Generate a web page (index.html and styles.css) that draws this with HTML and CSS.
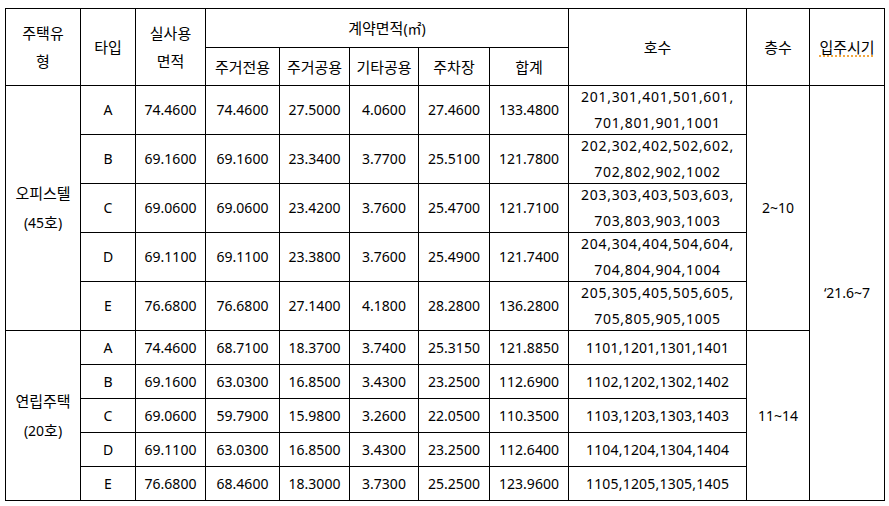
FILE: index.html
```html
<!DOCTYPE html>
<html lang="ko">
<head>
<meta charset="utf-8">
<link rel="stylesheet" href="styles.css">
</head>
<body>
<table class="grid">
  <colgroup>
    <col class="c1"><col class="c2"><col class="c3"><col class="c4"><col class="c5"><col class="c6"><col class="c7"><col class="c8"><col class="c9"><col class="c10"><col class="c11">
  </colgroup>
  <tr class="h1">
    <td rowspan="2" class="ko"><div class="two-h">주택유<br>형</div></td>
    <td rowspan="2" class="ko">타입</td>
    <td rowspan="2" class="ko"><div class="two-h">실사용<br>면적</div></td>
    <td colspan="5"><span class="ko">계약면적</span>(㎡)</td>
    <td rowspan="2" class="ko">호수</td>
    <td rowspan="2" class="ko">층수</td>
    <td rowspan="2" class="ko"><span class="spell">입주시기</span></td>
  </tr>
  <tr class="h2">
    <td class="ko">주거전용</td><td class="ko">주거공용</td><td class="ko">기타공용</td><td class="ko">주차장</td><td class="ko">합계</td>
  </tr>
  <tr class="r1">
    <td rowspan="5"><div class="two-g"><span class="ko">오피스텔</span><br>(45<span class="ko">호</span>)</div></td>
    <td>A</td><td>74.4600</td><td>74.4600</td><td>27.5000</td><td>4.0600</td><td>27.4600</td><td>133.4800</td>
    <td><div class="units">201,301,401,501,601,<br>701,801,901,1001</div></td>
    <td rowspan="5">2~10</td>
    <td rowspan="10">‘21.6~7</td>
  </tr>
  <tr class="r1">
    <td>B</td><td>69.1600</td><td>69.1600</td><td>23.3400</td><td>3.7700</td><td>25.5100</td><td>121.7800</td>
    <td><div class="units">202,302,402,502,602,<br>702,802,902,1002</div></td>
  </tr>
  <tr class="r1">
    <td>C</td><td>69.0600</td><td>69.0600</td><td>23.4200</td><td>3.7600</td><td>25.4700</td><td>121.7100</td>
    <td><div class="units">203,303,403,503,603,<br>703,803,903,1003</div></td>
  </tr>
  <tr class="r1">
    <td>D</td><td>69.1100</td><td>69.1100</td><td>23.3800</td><td>3.7600</td><td>25.4900</td><td>121.7400</td>
    <td><div class="units">204,304,404,504,604,<br>704,804,904,1004</div></td>
  </tr>
  <tr class="r1">
    <td>E</td><td>76.6800</td><td>76.6800</td><td>27.1400</td><td>4.1800</td><td>28.2800</td><td>136.2800</td>
    <td><div class="units">205,305,405,505,605,<br>705,805,905,1005</div></td>
  </tr>
  <tr class="r2">
    <td rowspan="5"><div class="two-g"><span class="ko">연립주택</span><br>(20<span class="ko">호</span>)</div></td>
    <td>A</td><td>74.4600</td><td>68.7100</td><td>18.3700</td><td>3.7400</td><td>25.3150</td><td>121.8850</td>
    <td class="units2">1101,1201,1301,1401</td>
    <td rowspan="5">11~14</td>
  </tr>
  <tr class="r2">
    <td>B</td><td>69.1600</td><td>63.0300</td><td>16.8500</td><td>3.4300</td><td>23.2500</td><td>112.6900</td>
    <td class="units2">1102,1202,1302,1402</td>
  </tr>
  <tr class="r2">
    <td>C</td><td>69.0600</td><td>59.7900</td><td>15.9800</td><td>3.2600</td><td>22.0500</td><td>110.3500</td>
    <td class="units2">1103,1203,1303,1403</td>
  </tr>
  <tr class="r2">
    <td>D</td><td>69.1100</td><td>63.0300</td><td>16.8500</td><td>3.4300</td><td>23.2500</td><td>112.6400</td>
    <td class="units2">1104,1204,1304,1404</td>
  </tr>
  <tr class="r2">
    <td>E</td><td>76.6800</td><td>68.4600</td><td>18.3000</td><td>3.7300</td><td>25.2500</td><td>123.9600</td>
    <td class="units2">1105,1205,1305,1405</td>
  </tr>
</table>
</body>
</html>
```

FILE: styles.css
```css
html, body {
  background: #ffffff;
}
body {
  margin: 8px 0 0 5px;
  font-family: "Noto Sans", "Noto Sans CJK KR", sans-serif;
  font-size: 14px;
  color: #000000;
}
.grid {
  border-collapse: collapse;
  table-layout: fixed;
  width: 879px;
}
.grid td {
  border: 1px solid #000000;
  padding: 0;
  text-align: center;
  vertical-align: middle;
  line-height: 20px;
  white-space: nowrap;
  overflow: visible;
}
.ko {
  font-family: "Noto Sans CJK KR", sans-serif;
  font-size: 15px;
}
.c1 { width: 75px; }
.c2 { width: 55px; }
.c3 { width: 70px; }
.c4 { width: 74px; }
.c5 { width: 70px; }
.c6 { width: 69px; }
.c7 { width: 71px; }
.c8 { width: 79px; }
.c9 { width: 178px; }
.c10 { width: 63px; }
.c11 { width: 75px; }
.h1 td { height: 38px; }
.h2 td { height: 37px; }
.r1 td { height: 48px; }
.r2 td { height: 33px; }
.two-h {
  line-height: 28px;
}
.two-g {
  line-height: 28px;
}
.units {
  height: 48px;
  display: flex;
  flex-direction: column;
  justify-content: center;
  line-height: 26.5px;
  letter-spacing: 0.7px;
}
.grid td.units2 {
  letter-spacing: 0.2px;
}
.spell {
  text-decoration: underline dotted #f08a00;
  text-underline-offset: 3px;
}
```
